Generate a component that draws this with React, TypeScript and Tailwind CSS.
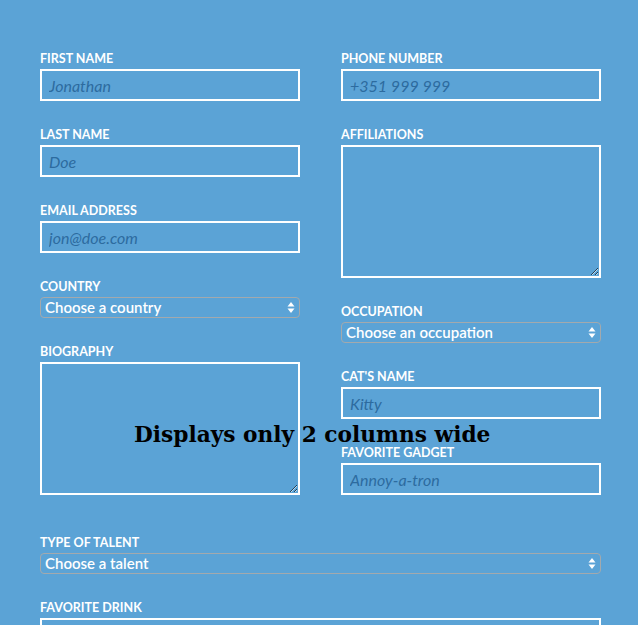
import React from 'react'

const lato = { fontFamily: 'Lato, "Open Sans", sans-serif' }

function Label({ children }: { children: React.ReactNode }) {
  return (
    <label className="block text-[12.5px] leading-[18px] font-bold uppercase text-white mb-[1px]">
      {children}
    </label>
  )
}

function TextField({ label, placeholder }: { label: string; placeholder: string }) {
  return (
    <div className="mb-[25px]">
      <Label>{label}</Label>
      <input
        type="text"
        placeholder={placeholder}
        className="block w-full h-[32px] border-2 border-white bg-transparent px-[7px] text-[16px] italic text-white placeholder:text-[#2d6b9f] outline-none"
      />
    </div>
  )
}

function TextArea({ label }: { label: string }) {
  return (
    <div className="mb-[25px]">
      <Label>{label}</Label>
      <textarea className="block w-full h-[133px] border-2 border-white bg-transparent px-[7px] py-[4px] text-[16px] text-white outline-none" />
    </div>
  )
}

function SelectField({ label, placeholder }: { label: string; placeholder: string }) {
  return (
    <div className="mb-[25px]">
      <Label>{label}</Label>
      <div className="relative h-[21px]">
        <select className="block w-full h-[21px] appearance-none rounded-[4px] border border-[#a3a9ad] bg-transparent pl-[4px] pr-[20px] text-[15px] leading-[19px] font-semibold text-white outline-none">
          <option>{placeholder}</option>
        </select>
        <svg
          className="absolute right-[5px] top-[4px] pointer-events-none"
          width="8"
          height="13"
          viewBox="0 0 8 13"
        >
          <path d="M4 1 L7.5 5.5 H0.5 Z" fill="#ffffff" />
          <path d="M4 12 L7.5 7.5 H0.5 Z" fill="#ffffff" />
        </svg>
      </div>
    </div>
  )
}

export default function App() {
  return (
    <div className="relative h-[625px] bg-[#5ba3d6] overflow-hidden" style={lato}>
      <div className="w-[561px] ml-[40px] pt-[50px]">
        <div className="grid grid-cols-[260px_260px] gap-x-[41px]">
          <div>
            <TextField label="First Name" placeholder="Jonathan" />
            <TextField label="Last Name" placeholder="Doe" />
            <TextField label="Email Address" placeholder="jon@doe.com" />
            <SelectField label="Country" placeholder="Choose a country" />
            <TextArea label="Biography" />
          </div>
          <div>
            <TextField label="Phone Number" placeholder="+351 999 999" />
            <TextArea label="Affiliations" />
            <SelectField label="Occupation" placeholder="Choose an occupation" />
            <TextField label="Cat's Name" placeholder="Kitty" />
            <TextField label="Favorite Gadget" placeholder="Annoy-a-tron" />
          </div>
        </div>
        <div className="mt-[14px]">
          <SelectField label="Type of Talent" placeholder="Choose a talent" />
          <TextField label="Favorite Drink" placeholder="" />
        </div>
      </div>

      <h2
        className="absolute left-[134px] top-[420px] text-[21.7px] leading-[30px] font-bold text-black whitespace-nowrap"
        style={{ fontFamily: '"DejaVu Serif", serif' }}
      >
        Displays only 2 columns wide
      </h2>
    </div>
  )
}
